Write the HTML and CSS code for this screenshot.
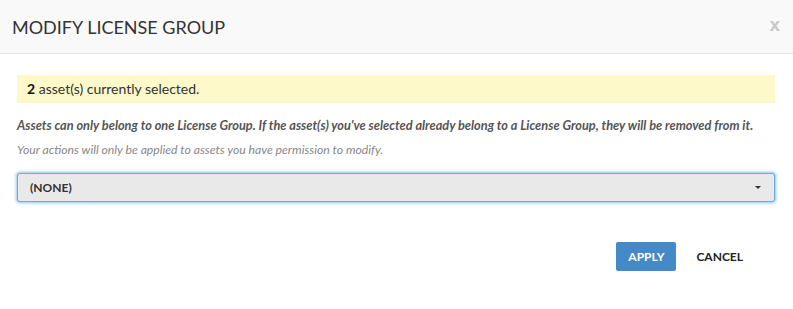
FILE: index.html
```html
<!DOCTYPE html>
<html lang="en">
<head>
  <meta charset="UTF-8" />
  <title>Modify License Group</title>
  <link rel="stylesheet" href="styles.css">
</head>
<body>
  <div class="modal">
    <header class="modal-header">
      <h1>MODIFY LICENSE GROUP</h1>
      <span class="close">x</span>
    </header>

    <div class="modal-body">
      <div class="notice"><strong>2</strong> asset(s) currently selected.</div>

      <p class="warning">Assets can only belong to one License Group. If the asset(s) you've selected already belong to a License Group, they will be removed from it.</p>
      <p class="hint">Your actions will only be applied to assets you have permission to modify.</p>

      <div class="select">
        <span>(NONE)</span>
        <span class="caret"></span>
      </div>
    </div>

    <footer class="modal-footer">
      <button class="btn btn-primary">APPLY</button>
      <button class="btn btn-link">CANCEL</button>
    </footer>
  </div>
</body>
</html>
```

FILE: styles.css
```css
body {
  margin: 0;
  font-family: Lato, 'Open Sans', sans-serif;
  background: #fff;
  color: #333;
}

.modal-header {
  display: flex;
  align-items: center;
  justify-content: space-between;
  height: 53px;
  padding: 0 13px 0 12px;
  background: #f9f9f9;
  border-bottom: 1px solid #e3e3e3;
}

.modal-header h1 {
  margin: 0;
  font-size: 18px;
  font-weight: 400;
  color: #333;
}

.close {
  font-family: 'Liberation Sans', sans-serif;
  font-size: 19px;
  font-weight: 700;
  color: #c8c8c8;
  margin-top: -3px;
}

.modal-body {
  padding: 21px 18px 0 17px;
}

.notice {
  background: #fdf9c8;
  padding: 0 10px;
  height: 28px;
  line-height: 28px;
  font-size: 14px;
  color: #333;
}

.notice strong {
  color: #111;
}

.warning {
  margin: 14px 0 0;
  font-size: 12.75px;
  font-weight: 700;
  font-style: italic;
  color: #555;
}

.hint {
  margin: 9px 0 0;
  font-size: 12.2px;
  font-style: italic;
  color: #888;
}

.select {
  display: flex;
  align-items: center;
  justify-content: space-between;
  margin-top: 16px;
  height: 27px;
  padding: 0 13px 0 12px;
  background: #e9e9e9;
  border: 1px solid #66afe9;
  border-radius: 3px;
  box-shadow: 0 0 3px 1px rgba(102, 175, 233, 0.75);
  font-size: 12px;
  font-weight: 700;
  color: #333;
}

.caret {
  width: 0;
  height: 0;
  border-left: 3.5px solid transparent;
  border-right: 3.5px solid transparent;
  border-top: 3.5px solid #333;
}

.modal-footer {
  display: flex;
  justify-content: flex-end;
  gap: 8px;
  margin-top: 40px;
  padding-right: 38px;
}

.btn {
  height: 29px;
  padding: 0 12px;
  border: none;
  border-radius: 2px;
  font-family: Lato, 'Open Sans', sans-serif;
  font-size: 12px;
  font-weight: 700;
  cursor: pointer;
}

.btn-primary {
  background: #4689c8;
  color: #fff;
}

.btn-link {
  background: none;
  color: #222;
}
```
